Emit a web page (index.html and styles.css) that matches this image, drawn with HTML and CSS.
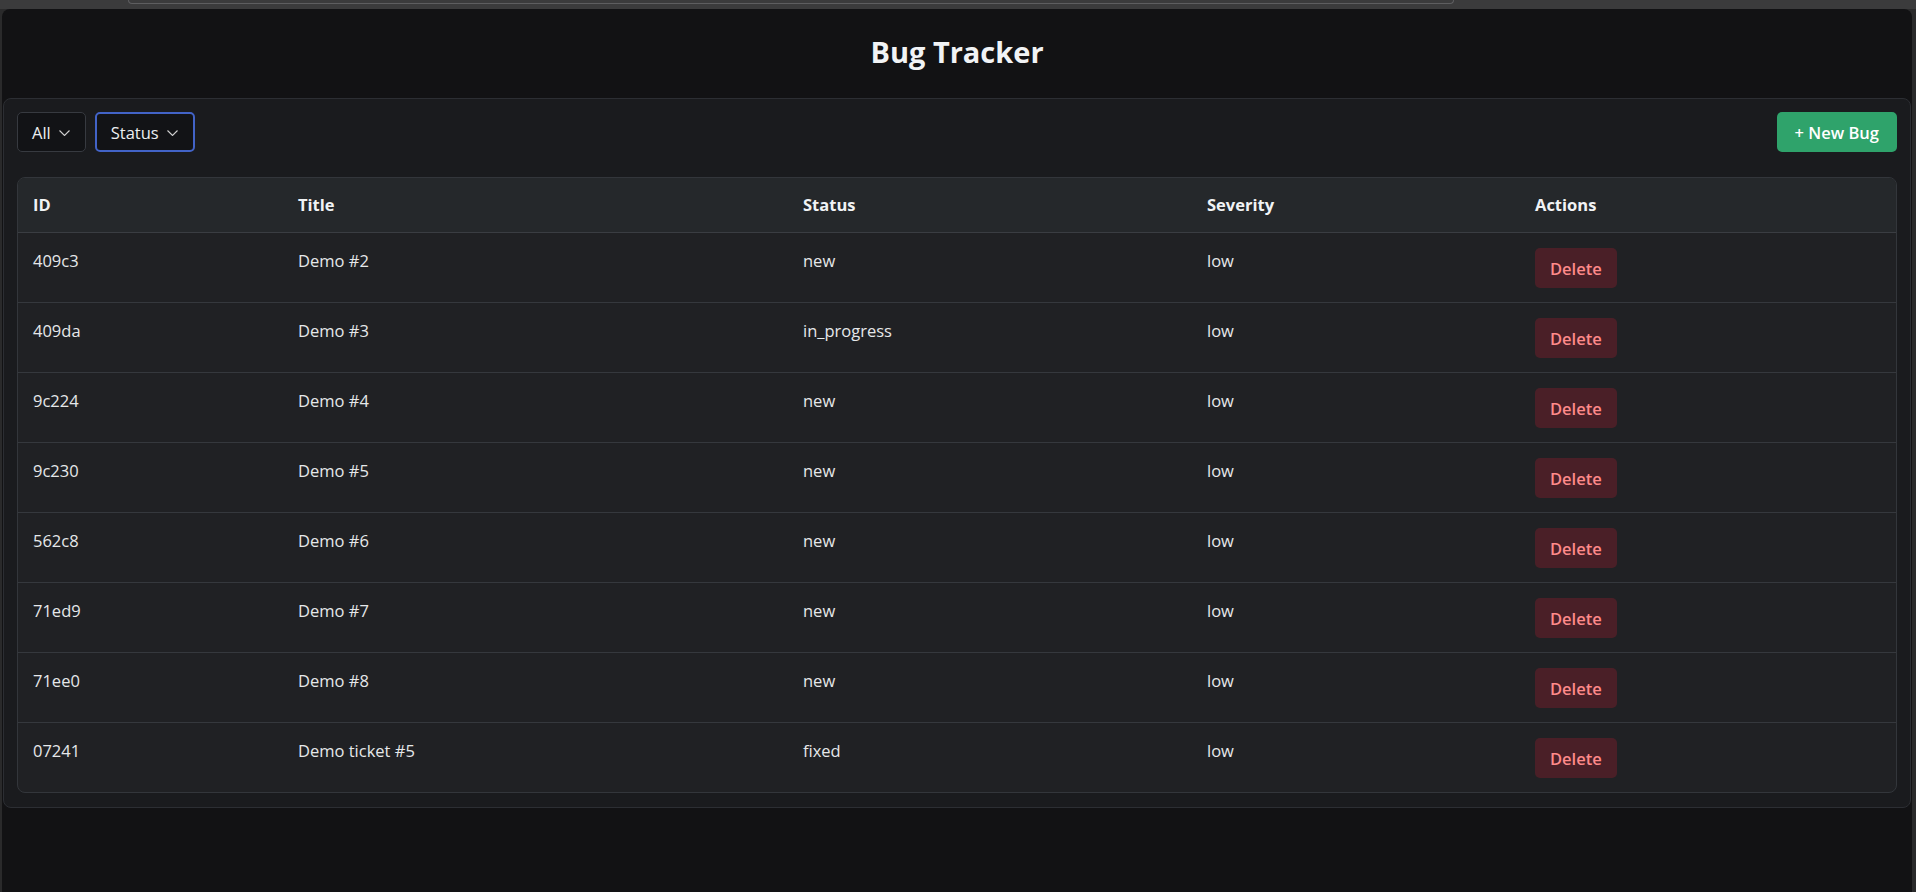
FILE: index.html
```html
<!DOCTYPE html>
<html lang="en">
<head>
<meta charset="utf-8">
<title>Bug Tracker</title>
<link rel="stylesheet" href="styles.css">
</head>
<body>
<div class="chrome"><div class="chrome-bar"></div></div>
<div class="app">
  <header class="app-header"><h1 class="app-title">Bug Tracker</h1></header>
  <section class="panel">
    <div class="toolbar">
      <div class="filters">
        <button class="select">All <svg class="chev" width="11" height="6" viewBox="0 0 11 6"><polyline points="0.5,0.5 5.5,5.5 10.5,0.5" fill="none" stroke="#d0d0d0" stroke-width="1.1"/></svg></button>
        <button class="select select-focus">Status <svg class="chev" width="11" height="6" viewBox="0 0 11 6"><polyline points="0.5,0.5 5.5,5.5 10.5,0.5" fill="none" stroke="#d0d0d0" stroke-width="1.1"/></svg></button>
      </div>
      <button class="btn-new">+ New Bug</button>
    </div>
    <div class="table-card">
      <table class="bugs">
        <colgroup>
          <col class="c-id"><col class="c-title"><col class="c-status"><col class="c-sev"><col class="c-act">
        </colgroup>
        <thead>
          <tr><th>ID</th><th>Title</th><th>Status</th><th>Severity</th><th>Actions</th></tr>
        </thead>
        <tbody>
          <tr><td>409c3</td><td>Demo #2</td><td>new</td><td>low</td><td><button class="btn-del">Delete</button></td></tr>
          <tr><td>409da</td><td>Demo #3</td><td>in_progress</td><td>low</td><td><button class="btn-del">Delete</button></td></tr>
          <tr><td>9c224</td><td>Demo #4</td><td>new</td><td>low</td><td><button class="btn-del">Delete</button></td></tr>
          <tr><td>9c230</td><td>Demo #5</td><td>new</td><td>low</td><td><button class="btn-del">Delete</button></td></tr>
          <tr><td>562c8</td><td>Demo #6</td><td>new</td><td>low</td><td><button class="btn-del">Delete</button></td></tr>
          <tr><td>71ed9</td><td>Demo #7</td><td>new</td><td>low</td><td><button class="btn-del">Delete</button></td></tr>
          <tr><td>71ee0</td><td>Demo #8</td><td>new</td><td>low</td><td><button class="btn-del">Delete</button></td></tr>
          <tr><td>07241</td><td>Demo ticket #5</td><td>fixed</td><td>low</td><td><button class="btn-del">Delete</button></td></tr>
        </tbody>
      </table>
    </div>
  </section>
</div>
</body>
</html>
```

FILE: styles.css
```css
* { box-sizing: border-box; }
html, body { margin: 0; padding: 0; }
body {
  background: #2a2a2b;
  font-family: "Open Sans", "Noto Sans", sans-serif;
  color: #e9ecef;
  height: 892px;
  overflow: hidden;
}
.chrome {
  height: 9px;
  background: #3b3b3c;
}
.chrome-bar {
  margin-left: 128px;
  width: 1326px;
  height: 4px;
  border: 1px solid #5e5e60;
  border-top: none;
  border-radius: 0 0 10px 10px;
}
.app {
  margin: 0 4px 0 2px;
  background: #121214;
  border-radius: 8px 8px 0 0;
  height: 883px;
}
.app-header {
  display: flex;
  justify-content: center;
  padding: 23px 0 27px;
}
.app-title {
  margin: 0;
  font-size: 29px;
  line-height: 39px;
  font-weight: 700;
  color: #f1f3f5;
}
.panel {
  margin: 0 1px;
  background: #1a1b1e;
  border: 1px solid #2c2e33;
  border-radius: 8px;
  padding: 13px 13px 14px;
  display: flex;
  flex-direction: column;
  gap: 25px;
}
.toolbar {
  display: flex;
  justify-content: space-between;
  align-items: center;
}
.filters {
  display: flex;
  gap: 9px;
}
.select {
  display: flex;
  align-items: center;
  gap: 8px;
  height: 40px;
  padding: 0 15px 0 14px;
  background: #121316;
  border: 1px solid #373a40;
  border-radius: 5px;
  color: #eceef0;
  font-family: inherit;
  font-size: 16.5px;
}
.select-focus {
  border: 2px solid #4263c7;
  padding: 0 15px 0 14px;
}
.chev { display: block; margin-top: 1px; }
.btn-new {
  height: 40px;
  padding: 0 18px;
  background: #2fa36b;
  border: none;
  border-radius: 5px;
  color: #ffffff;
  font-family: inherit;
  font-weight: 600;
  font-size: 16.5px;
}
.table-card {
  border: 1px solid #33363b;
  border-radius: 8px;
  overflow: hidden;
  background: #202124;
}
.bugs {
  width: 100%;
  border-collapse: collapse;
  table-layout: fixed;
}
.c-id { width: 265px; }
.c-title { width: 505px; }
.c-status { width: 404px; }
.c-sev { width: 328px; }
.c-act { width: 376px; }
.bugs th {
  background: #25282b;
  text-align: left;
  font-weight: 700;
  font-size: 16.5px;
  line-height: 26px;
  padding: 14px 15px;
  color: #f1f3f5;
  border-bottom: 1px solid #3a3d42;
}
.bugs td {
  vertical-align: top;
  font-size: 16.5px;
  line-height: 26px;
  padding: 15px 15px 14px;
  color: #e6e8ea;
  border-bottom: 1px solid #35383d;
}
.bugs tbody tr:last-child td { border-bottom: none; }
.btn-del {
  display: block;
  height: 40px;
  padding: 0 15px;
  background: #4a1f27;
  border: none;
  border-radius: 5px;
  color: #ff8a8a;
  font-family: inherit;
  font-weight: 600;
  font-size: 16.5px;
}
```
